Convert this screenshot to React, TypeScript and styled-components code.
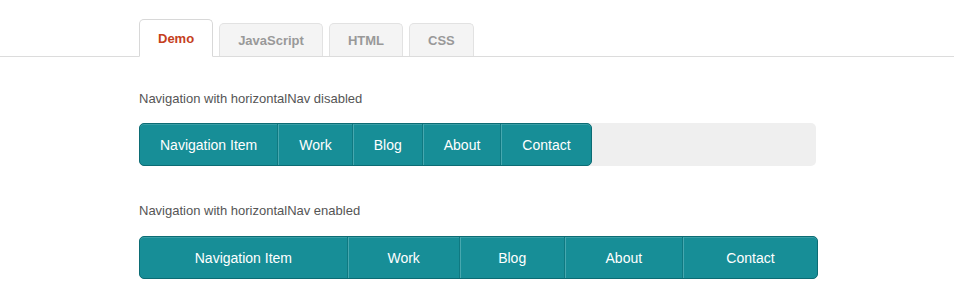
import React from "react";
import styled, { createGlobalStyle } from "styled-components";

const Global = createGlobalStyle`
  html, body { margin: 0; padding: 0; background: #fff; }
  body { font-family: "Liberation Sans", Arial, sans-serif; }
`;

const Page = styled.div`
  width: 954px;
  height: 308px;
  overflow: hidden;
`;

const TabBar = styled.div`
  display: flex;
  align-items: flex-end;
  gap: 6px;
  padding: 19px 0 0 139px;
  border-bottom: 1px solid #dcdcdc;
  height: 37px;
`;

const Tab = styled.div<{ $active?: boolean }>`
  box-sizing: border-box;
  padding: 0 18px;
  height: ${(p) => (p.$active ? "38px" : "33px")};
  margin-bottom: ${(p) => (p.$active ? "-1px" : "0")};
  display: flex;
  align-items: center;
  justify-content: center;
  border: 1px solid ${(p) => (p.$active ? "#d8d8d8" : "#e2e2e2")};
  border-bottom: ${(p) => (p.$active ? "1px solid #fff" : "none")};
  border-radius: 5px 5px 0 0;
  background: ${(p) => (p.$active ? "#fff" : "#f4f4f4")};
  color: ${(p) => (p.$active ? "#c5401c" : "#999")};
  font-weight: bold;
  font-size: 13px;
  padding-top: ${(p) => (p.$active ? "1px" : "0")};
`;

const Content = styled.div`
  padding: 0 0 0 139px;
`;

const Label = styled.div<{ $top: number; $bottom: number }>`
  font-size: 13px;
  color: #555;
  height: 16px;
  line-height: 16px;
  margin: ${(p) => `${p.$top}px 0 ${p.$bottom}px`};
`;

const Track = styled.div`
  width: 677px;
  background: #efefef;
  border-radius: 5px;
`;

const Nav = styled.ul<{ $stretch?: boolean }>`
  box-sizing: border-box;
  margin: 0;
  padding: 0;
  list-style: none;
  display: ${(p) => (p.$stretch ? "table" : "inline-table")};
  width: ${(p) => (p.$stretch ? "679px" : "auto")};
  height: 43px;
  border: 1px solid #0c6c74;
  border-radius: 5px;
  background: #178e97;
  overflow: hidden;
  box-shadow: inset 0 1px 0 rgba(255, 255, 255, 0.15);
  vertical-align: top;
`;

const Item = styled.li`
  display: table-cell;
  vertical-align: middle;
  text-align: center;
  white-space: nowrap;
  padding: 0 20px;
  color: #fff;
  font-size: 14px;
  border-left: 1px solid #47a8af;
  border-right: 1px solid #0f7981;
  &:first-child { border-left: none; }
  &:last-child { border-right: none; }
`;

const items = ["Navigation Item", "Work", "Blog", "About", "Contact"];

export default function App() {
  return (
    <Page>
      <Global />
      <TabBar>
        <Tab $active>Demo</Tab>
        <Tab>JavaScript</Tab>
        <Tab>HTML</Tab>
        <Tab>CSS</Tab>
      </TabBar>
      <Content>
        <Label $top={34} $bottom={16}>Navigation with horizontalNav disabled</Label>
        <Track>
          <Nav>
            {items.map((t) => (
              <Item key={t}>{t}</Item>
            ))}
          </Nav>
        </Track>
        <Label $top={37} $bottom={17}>Navigation with horizontalNav enabled</Label>
        <Nav $stretch>
          {items.map((t) => (
            <Item key={t}>{t}</Item>
          ))}
        </Nav>
      </Content>
    </Page>
  );
}
